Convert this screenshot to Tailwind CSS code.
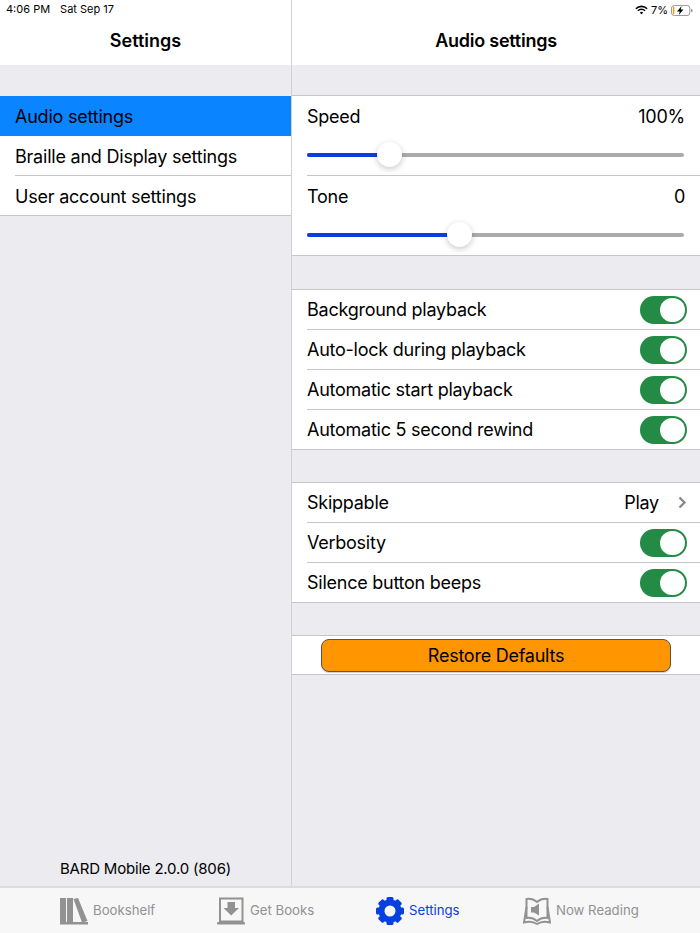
<!DOCTYPE html>
<html lang="en">
<head>
    <meta charset="UTF-8">
    <meta name="viewport" content="width=device-width, initial-scale=1.0">
    <title>Audio settings</title>
    <script src="https://cdn.jsdelivr.net/npm/@tailwindcss/browser@4"></script>
</head>
<body class="font-['Inter',sans-serif] text-black">
<div class="w-[700px] h-[933px] overflow-hidden flex flex-col bg-[#ebebf0]">

    <div class="flex-1 flex min-h-0">
        <!-- master column -->
        <div class="w-[292px] shrink-0 flex flex-col border-r border-[#d1d1d6]">
            <div class="h-[65px] bg-white flex flex-col">
                <div class="h-[20px] pl-[6px] pt-[2px] flex gap-[10px] text-[11px] leading-[14px]">
                    <span>4:06 PM</span><span>Sat Sep 17</span>
                </div>
                <div class="text-center text-[18px] font-semibold leading-[22px] mt-[10px]">Settings</div>
            </div>
            <div class="mt-[31px] bg-white border-b border-[#c6c6c8] text-[18px] tracking-[-0.22px]">
                <div class="h-[40px] bg-[#0a84ff] text-black pl-[15px] flex items-center">Audio settings</div>
                <div class="h-[39px] pl-[15px] pt-[2px] flex items-center">Braille and Display settings</div>
                <div class="ml-[15px] h-[40px] pt-[2px] flex items-center border-t border-[#c6c6c8]">User account settings</div>
            </div>
            <div class="mt-auto pb-[8px] text-center text-[15px] tracking-[-0.2px] leading-[18px]">BARD Mobile 2.0.0 (806)</div>
        </div>

        <!-- detail column -->
        <div class="flex-1 flex flex-col text-[18px] tracking-[-0.25px]">
            <div class="h-[65px] bg-white flex flex-col">
                <div class="h-[20px] pr-[6px] flex items-center justify-end gap-[3px] text-[11px] tracking-normal">
                    <svg width="13" height="10" viewBox="0 0 15 11" fill="none" stroke="#000" stroke-width="1.8">
                        <path d="M1 4a9.2 9.2 0 0 1 13 0"/>
                        <path d="M3.4 6.4a5.8 5.8 0 0 1 8.2 0"/>
                        <path d="M7.5 10.4 5.6 8.6a2.7 2.7 0 0 1 3.8 0Z" fill="#000" stroke="none"/>
                    </svg>
                    <span>7%</span>
                    <svg width="23" height="11" viewBox="0 0 25 12" fill="none">
                        <rect x="0.5" y="0.5" width="20" height="11" rx="3" stroke="#8e8e93"/>
                        <rect x="2" y="2" width="1.6" height="8" rx="0.6" fill="#ff9500"/>
                        <path d="M22 4v4c1-.3 1.6-1 1.6-2S23 4.300 22 4Z" fill="#8e8e93"/>
                        <path d="M11.500 1 6.500 7h3l-1 4 5-6h-3Z" fill="#000"/>
                    </svg>
                </div>
                <div class="text-center text-[18px] font-semibold leading-[22px] mt-[10px]">Audio settings</div>
            </div>

            <!-- sliders -->
            <div class="mt-[30px] bg-white border-y border-[#c6c6c8] pl-[15px]">
                <div class="h-[79px] pr-[15px] pt-[10px]">
                    <div class="flex justify-between leading-[22px]"><span>Speed</span><span>100%</span></div>
                    <div class="relative h-[4px] mt-[25px] mr-[1px] rounded-full bg-[#ababab]">
                        <div class="h-full w-[83px] rounded-full bg-[#0840e0]"></div>
                        <div class="absolute left-[70px] top-[-11px] w-[25px] h-[25px] rounded-full bg-white shadow-[0_2px_6px_rgba(0,0,0,0.22)]"></div>
                    </div>
                </div>
                <div class="h-[80px] pr-[15px] pt-[10px] border-t border-[#c6c6c8]">
                    <div class="flex justify-between leading-[22px]"><span>Tone</span><span>0</span></div>
                    <div class="relative h-[4px] mt-[25px] mr-[1px] rounded-full bg-[#ababab]">
                        <div class="h-full w-[153px] rounded-full bg-[#0840e0]"></div>
                        <div class="absolute left-[140px] top-[-11px] w-[25px] h-[25px] rounded-full bg-white shadow-[0_2px_6px_rgba(0,0,0,0.22)]"></div>
                    </div>
                </div>
            </div>

            <!-- playback toggles -->
            <div class="mt-[33px] bg-white border-y border-[#c6c6c8] pl-[15px]">
                <div class="h-[39px] pr-[13px] flex items-center justify-between">
                    <span>Background playback</span>
                    <div class="w-[47px] h-[28px] rounded-full bg-[#238b45] p-[2px] flex justify-end"><div class="w-[25px] h-[24px] rounded-full bg-white"></div></div>
                </div>
                <div class="h-[40px] pr-[13px] flex items-center justify-between border-t border-[#c6c6c8]">
                    <span>Auto-lock during playback</span>
                    <div class="w-[47px] h-[28px] rounded-full bg-[#238b45] p-[2px] flex justify-end"><div class="w-[25px] h-[24px] rounded-full bg-white"></div></div>
                </div>
                <div class="h-[40px] pr-[13px] flex items-center justify-between border-t border-[#c6c6c8]">
                    <span>Automatic start playback</span>
                    <div class="w-[47px] h-[28px] rounded-full bg-[#238b45] p-[2px] flex justify-end"><div class="w-[25px] h-[24px] rounded-full bg-white"></div></div>
                </div>
                <div class="h-[40px] pr-[13px] flex items-center justify-between border-t border-[#c6c6c8]">
                    <span>Automatic 5 second rewind</span>
                    <div class="w-[47px] h-[28px] rounded-full bg-[#238b45] p-[2px] flex justify-end"><div class="w-[25px] h-[24px] rounded-full bg-white"></div></div>
                </div>
            </div>

            <!-- skippable group -->
            <div class="mt-[32px] bg-white border-y border-[#c6c6c8] pl-[15px]">
                <div class="h-[39px] pr-[13px] flex items-center justify-between">
                    <span>Skippable</span>
                    <div class="flex items-center gap-[19px]">
                        <span>Play</span>
                        <svg width="9" height="13" viewBox="0 0 9 13" fill="none" stroke="#8a8a8e" stroke-width="2.4"><path d="M1.500 1.500 6.500 6.500 1.500 11.500"/></svg>
                    </div>
                </div>
                <div class="h-[40px] pr-[13px] flex items-center justify-between border-t border-[#c6c6c8]">
                    <span>Verbosity</span>
                    <div class="w-[47px] h-[28px] rounded-full bg-[#238b45] p-[2px] flex justify-end"><div class="w-[25px] h-[24px] rounded-full bg-white"></div></div>
                </div>
                <div class="h-[40px] pr-[13px] flex items-center justify-between border-t border-[#c6c6c8]">
                    <span>Silence button beeps</span>
                    <div class="w-[47px] h-[28px] rounded-full bg-[#238b45] p-[2px] flex justify-end"><div class="w-[25px] h-[24px] rounded-full bg-white"></div></div>
                </div>
            </div>

            <!-- restore -->
            <div class="mt-[32px] h-[40px] bg-white border-y border-[#c6c6c8] flex items-center justify-center">
                <button class="w-[350px] h-[33px] rounded-[8px] bg-[#ff9500] border border-[#555] shadow-[0_1px_1px_rgba(0,0,0,0.2)] text-[18px] tracking-[-0.25px]">Restore Defaults</button>
            </div>
        </div>
    </div>

    <!-- tab bar -->
    <div class="h-[47px] shrink-0 bg-[#f7f7f7] border-t-2 border-[#dcdce0] flex items-center text-[13.2px] text-[#929292]">
        <div class="flex items-center gap-[5px] ml-[60px] w-[157px]">
            <svg width="28" height="28" viewBox="0 0 28 28" fill="#929292">
                <rect x="0" y="1" width="6" height="24"/>
                <rect x="7" y="1" width="6" height="24"/>
                <path d="M13.500 2 18 1 27.500 24 22 25.500Z"/>
                <rect x="0" y="25" width="28" height="2.500"/>
            </svg>
            <span class="pt-[1px]">Bookshelf</span>
        </div>
        <div class="flex items-center gap-[5px] w-[159px]">
            <svg width="28" height="28" viewBox="0 0 28 28" fill="none">
                <path d="M3 1.500H25.500V24.500H3Z" stroke="#929292" stroke-width="2"/>
                <path d="M10.500 5h7.500v6h4l-7.800 7.500L6.500 11h4Z" fill="#929292"/>
                <rect x="0" y="25" width="28" height="2.500" rx="1" fill="#929292"/>
            </svg>
            <span class="pt-[1px]">Get Books</span>
        </div>
        <div class="flex items-center gap-[5px] w-[147px] text-[#0840e0]">
            <svg width="28" height="28" viewBox="0 0 28 28">
                <circle cx="14" cy="14" r="8.500" fill="none" stroke="#0840e0" stroke-width="6"/>
                <g fill="#0840e0">
                    <rect x="10.500" y="0" width="7" height="5" rx="1.500"/>
                    <rect x="10.500" y="23" width="7" height="5" rx="1.500"/>
                    <rect x="0" y="10.500" width="5" height="7" rx="1.500"/>
                    <rect x="23" y="10.500" width="5" height="7" rx="1.500"/>
                    <rect x="10.500" y="0" width="7" height="5" rx="1.500" transform="rotate(45 14 14)"/>
                    <rect x="10.500" y="23" width="7" height="5" rx="1.500" transform="rotate(45 14 14)"/>
                    <rect x="0" y="10.500" width="5" height="7" rx="1.500" transform="rotate(45 14 14)"/>
                    <rect x="23" y="10.500" width="5" height="7" rx="1.500" transform="rotate(45 14 14)"/>
                </g>
            </svg>
            <span class="pt-[1px]">Settings</span>
        </div>
        <div class="flex items-center gap-[5px]">
            <svg width="28" height="28" viewBox="0 0 28 28" fill="none" stroke="#929292" stroke-width="2">
                <path d="M14 5C11 2.500 7 1.500 3.500 2V21C7 20.500 11 21.500 14 24C17 21.500 21 20.500 24.500 21V2C21 1.500 17 2.500 14 5Z"/>
                <path d="M3.500 10 1 25.500C6 24 11 25 14 27C17 25 22 24 27 25.500L24.500 10"/>
                <path d="M8 10H11L16 6.500V18.500L11 15.500H8Z" fill="#929292" stroke="none"/>
            </svg>
            <span class="pt-[1px]">Now Reading</span>
        </div>
    </div>
</div>
</body>
</html>
